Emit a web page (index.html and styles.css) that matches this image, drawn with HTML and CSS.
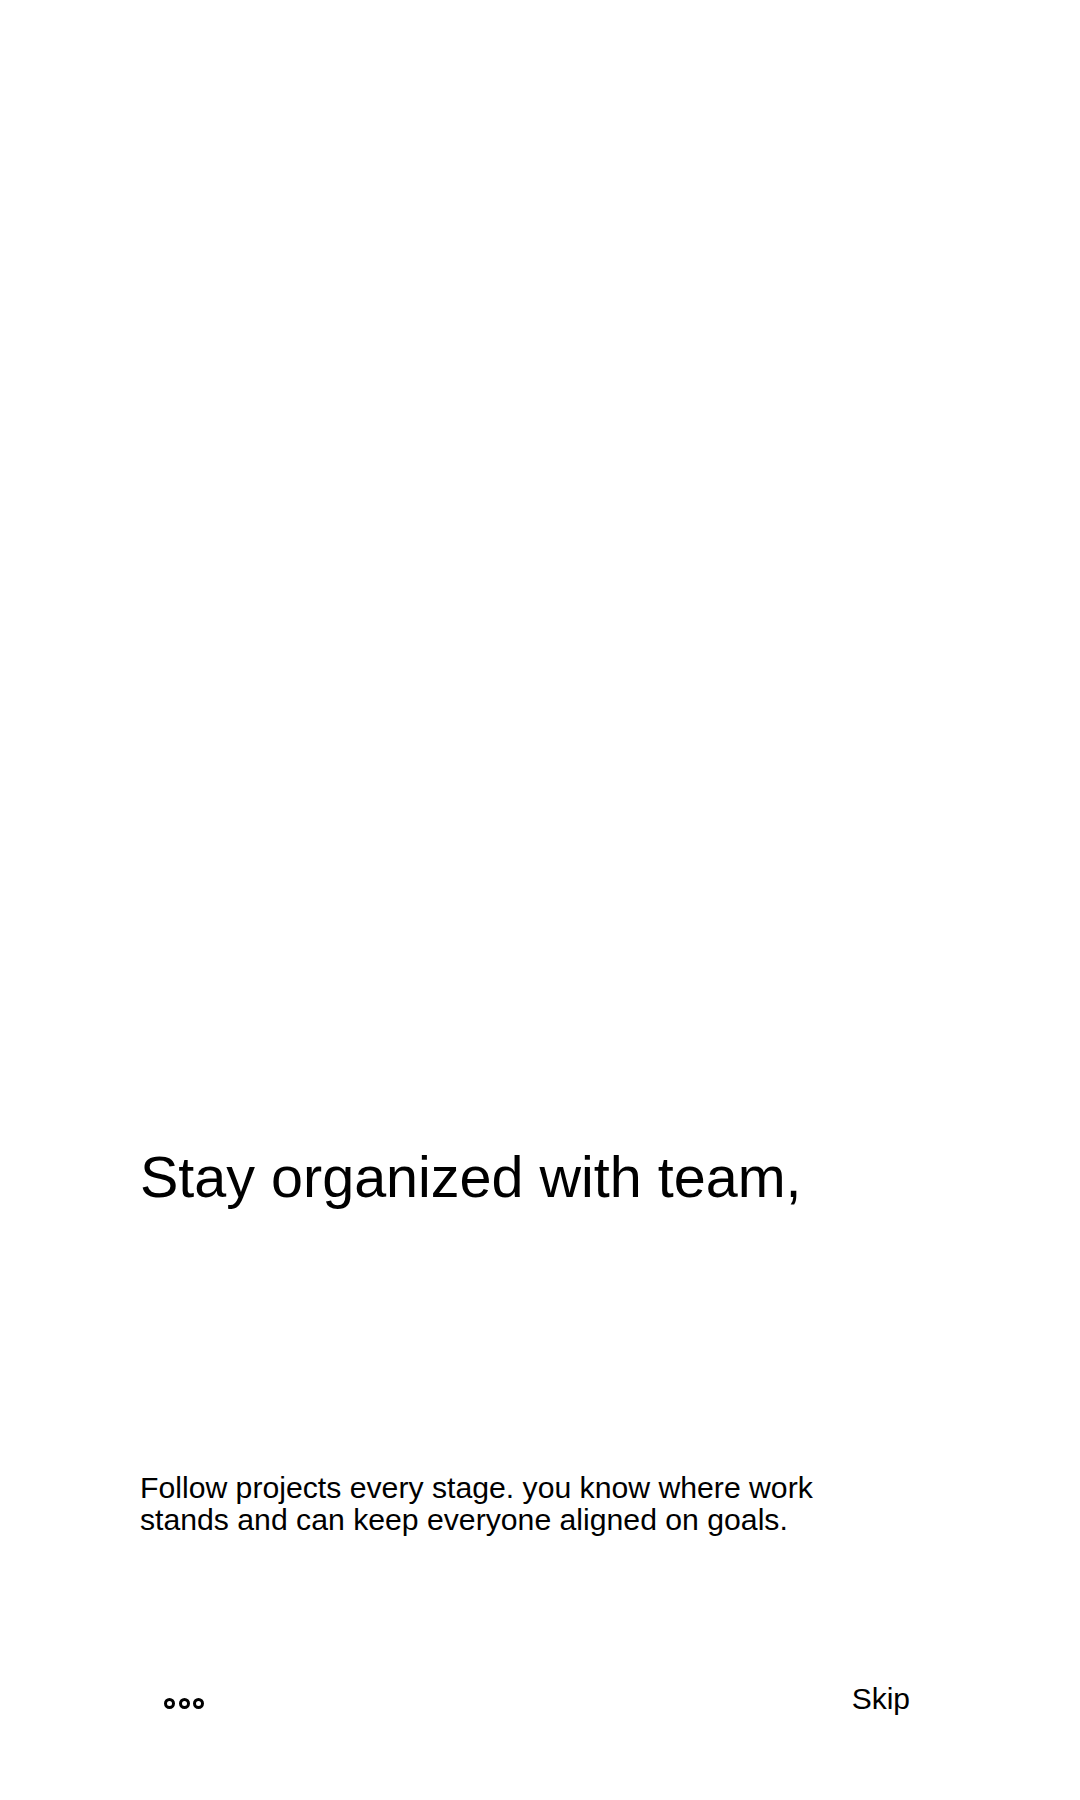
FILE: index.html
```html
<!DOCTYPE html>
<html lang="en">
<head>
<meta charset="utf-8">
<title>Onboarding</title>
<link rel="stylesheet" href="styles.css">
</head>
<body>
<div class="screen">
  <div class="hero"></div>
  <h1 class="title">Stay organized with team,</h1>
  <p class="desc">Follow projects every stage. you know where work<br>stands and can keep everyone aligned on goals.</p>
  <div class="footer">
    <div class="dots">
      <span class="dot"></span>
      <span class="dot"></span>
      <span class="dot"></span>
    </div>
    <span class="skip">Skip</span>
  </div>
</div>
</body>
</html>
```

FILE: styles.css
```css
html, body {
  margin: 0;
  padding: 0;
  background: #ffffff;
}
body {
  font-family: "Liberation Sans", Arial, sans-serif;
  color: #000000;
}
.screen {
  width: 1080px;
  height: 1800px;
  display: flex;
  flex-direction: column;
  padding: 0 170px 0 140px;
  box-sizing: border-box;
}
.hero {
  height: 1145px;
  flex: none;
}
.title {
  margin: 0;
  font-size: 57.5px;
  line-height: 64px;
  font-weight: 400;
}
.desc {
  margin: 263px 0 0 0;
  font-size: 30.2px;
  line-height: 32px;
}
.footer {
  margin-top: 147px;
  display: flex;
  justify-content: space-between;
  align-items: center;
  padding-left: 24px;
  height: 32px;
}
.dots {
  display: flex;
  gap: 3.5px;
  margin-top: 8px;
}
.dot {
  width: 11px;
  height: 11px;
  box-sizing: border-box;
  border: 3px solid #000000;
  border-radius: 50%;
}
.skip {
  font-size: 30px;
  line-height: 32px;
}
```
